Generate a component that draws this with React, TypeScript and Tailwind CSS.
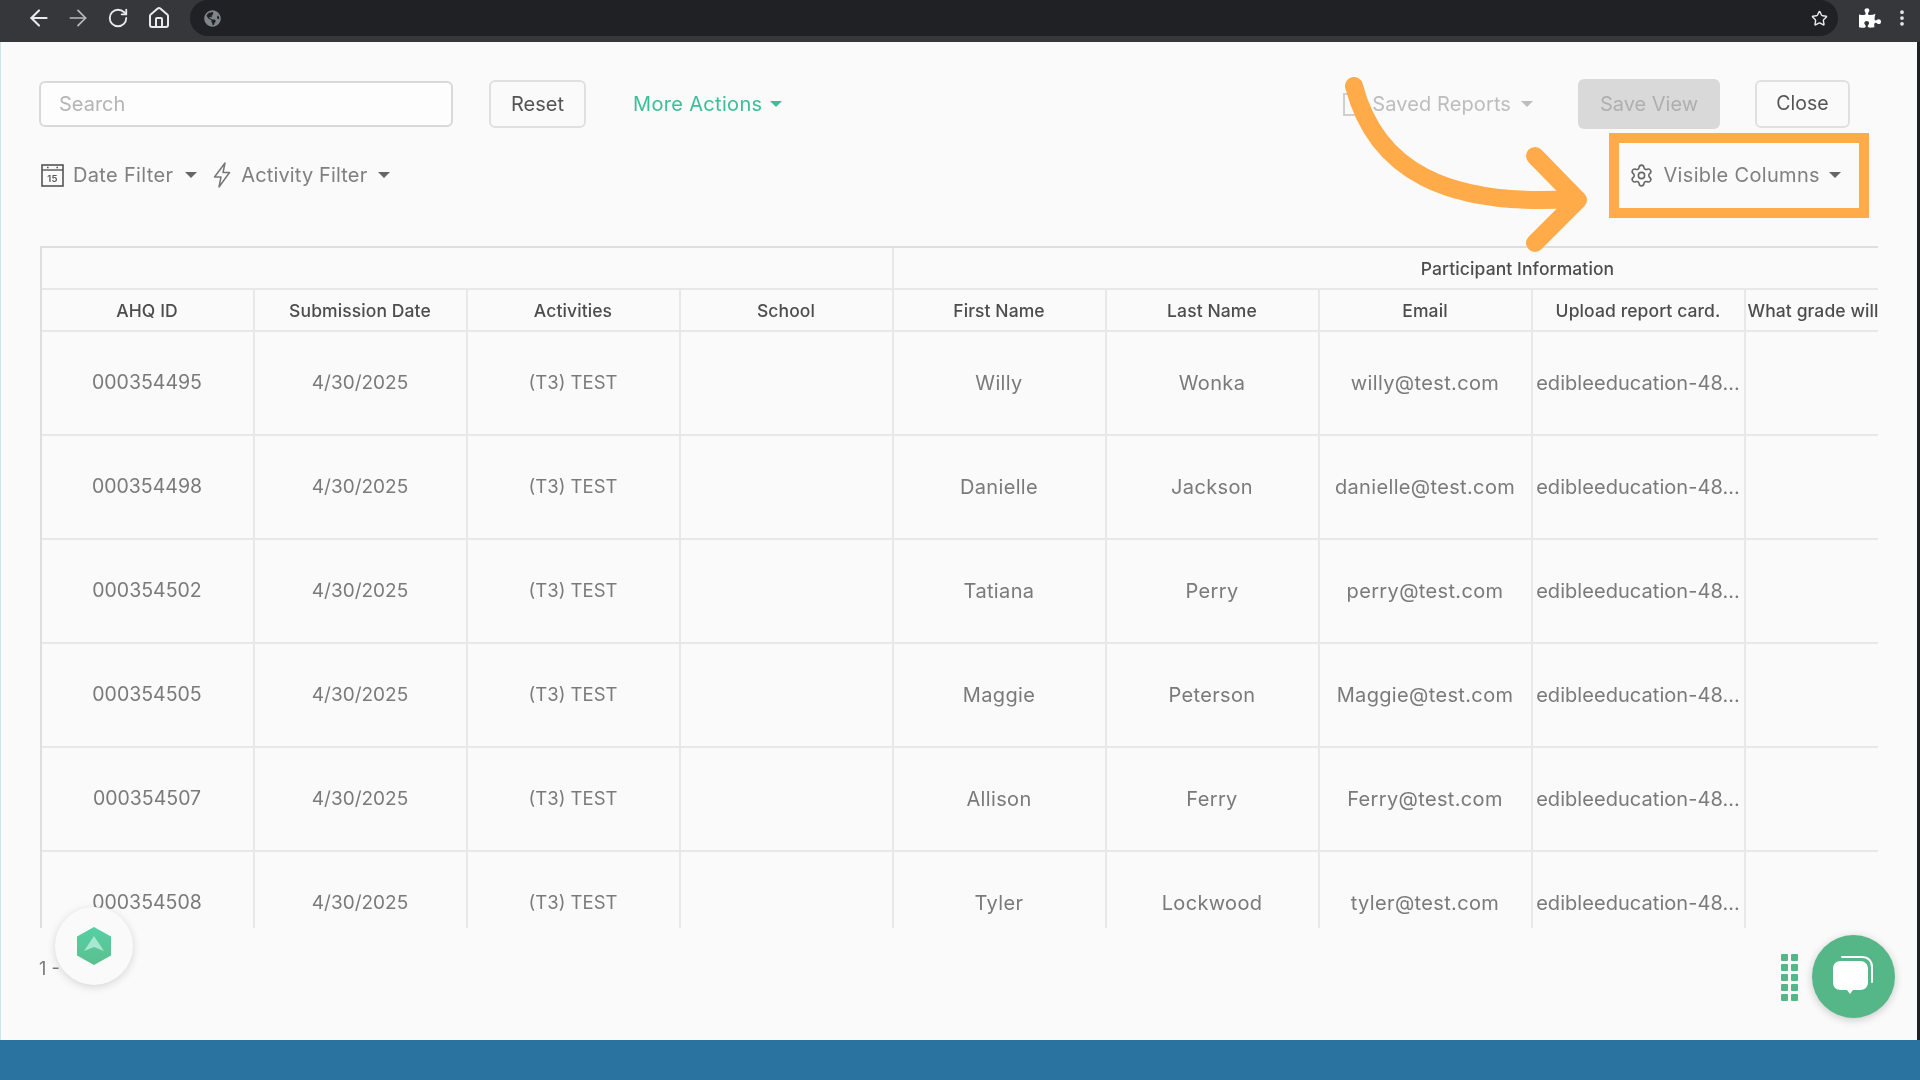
import React from "react";
import { ArrowLeft, ArrowRight, RotateCw, Home, Star, MoreVertical, Settings } from "lucide-react";
import { FaPuzzlePiece, FaGlobeAmericas } from "react-icons/fa";

const rows = [
  ["000354495", "Willy", "Wonka", "willy@test.com"],
  ["000354498", "Danielle", "Jackson", "danielle@test.com"],
  ["000354502", "Tatiana", "Perry", "perry@test.com"],
  ["000354505", "Maggie", "Peterson", "Maggie@test.com"],
  ["000354507", "Allison", "Ferry", "Ferry@test.com"],
  ["000354508", "Tyler", "Lockwood", "tyler@test.com"],
];
const headers = ["AHQ ID", "Submission Date", "Activities", "School", "First Name", "Last Name", "Email", "Upload report card."];

function Caret({ cls = "border-t-[#666]" }: { cls?: string }) {
  return <span className={`inline-block w-0 h-0 border-x-[6px] border-x-transparent border-t-[6px] ${cls}`} />;
}

function Head({ children }: { children?: React.ReactNode }) {
  return (
    <div className="h-[42px] pt-[2px] flex items-center justify-center border-r-2 border-b-2 border-[#e8e8e8] text-[17.5px] tracking-[0.1px] font-medium text-[#4d4d4d] whitespace-nowrap">
      {children}
    </div>
  );
}
function Cell({ children }: { children?: React.ReactNode }) {
  return (
    <div className="h-[104px] flex items-center justify-center border-r-2 border-b-2 border-[#e8e8e8] text-[19px] text-[#7a7a7a] whitespace-nowrap overflow-hidden">
      {children}
    </div>
  );
}
function WideCell({ children }: { children?: React.ReactNode }) {
  return (
    <div className="h-[104px] pb-[1px] flex items-center justify-center border-r-2 border-b-2 border-[#e8e8e8] text-[20px] tracking-[0.35px] text-[#7a7a7a] whitespace-nowrap overflow-hidden">
      {children}
    </div>
  );
}

export default function App() {
  return (
    <div className="relative w-[1920px] h-[1080px] overflow-hidden flex flex-col bg-[#fafafa] font-['Inter',sans-serif]">
      <header className="h-[42px] shrink-0 flex items-center bg-[#36373a] text-[#e8eaed]">
        <div className="w-[190px] h-[36px] mb-[6px] flex items-center pl-[26px] shrink-0">
          <ArrowLeft size={26} strokeWidth={1.9} />
          <ArrowRight size={26} strokeWidth={1.6} className="ml-[13px] text-[#b9bbbe]" />
          <RotateCw size={22} strokeWidth={2} className="ml-[16px]" />
          <Home size={24} strokeWidth={2} className="ml-[18px]" />
        </div>
        <div className="w-[1648px] h-[36px] mb-[6px] rounded-[18px] bg-[#202124] flex items-center pl-[14px] pr-[10px]">
          <FaGlobeAmericas size={17} className="text-[#80858b]" />
          <Star size={17} strokeWidth={2} className="ml-auto" />
        </div>
        <div className="flex-1 h-[36px] mb-[6px] flex items-center pl-[21px]">
          <FaPuzzlePiece size={22} className="text-white" />
          <MoreVertical size={20} strokeWidth={2.5} className="ml-[11px]" />
        </div>
      </header>

      <main className="relative flex-1 flex flex-col min-h-0 border-l border-[#cfe3ec] border-r-[3px] border-r-[#202124]">
        <div className="flex items-center h-[48px] mt-[38px] pl-[38px] pr-[67px] blur-[0.5px]">
          <div className="w-[414px] h-[46px] flex items-center border-2 border-[#d9d9d9] rounded-[6px] bg-[#fdfdfd] pl-[18px] text-[20px] text-[#b5b5b5]">
            Search
          </div>
          <button className="ml-[36px] w-[97px] h-[48px] border-2 border-[#e0e0e0] rounded-[6px] text-[20px] text-[#555]">Reset</button>
          <button className="ml-[47px] flex items-center gap-[8px] text-[20px] tracking-[0.33px] text-[#3cbf98]">
            More Actions <Caret cls="border-t-[#3cbf98]" />
          </button>
          <div className="ml-auto flex items-center">
            <span className="w-[20px] h-[23px] border-2 border-[#cfcfcf] mr-[9px]" />
            <span className="text-[20px] tracking-[0.1px] text-[#bdbdbd]">Saved Reports</span>
            <span className="ml-[10px] flex"><Caret cls="border-t-[#bdbdbd]" /></span>
            <button className="ml-[45px] w-[142px] h-[50px] rounded-[6px] bg-[#d9d9d9] text-[20px] text-[#afafaf]">Save View</button>
            <button className="ml-[35px] w-[95px] h-[48px] border-2 border-[#e0e0e0] rounded-[6px] text-[19.5px] text-[#555]">Close</button>
          </div>
        </div>

        <div className="flex items-center h-[40px] mt-[27px] pl-[40px] pr-[76px] text-[20px] tracking-[0.33px] text-[#808080] blur-[0.5px]">
          <svg width="23" height="23" viewBox="0 0 23 23" fill="none" stroke="#555" strokeWidth="1.6">
            <rect x="1" y="1" width="21" height="21" />
            <path d="M1 6h21" strokeWidth="1.4" />
            <path d="M6 3.5h1.6M15.4 3.5h1.6" strokeWidth="1.4" />
            <text x="11.5" y="18" textAnchor="middle" fontSize="9.5" fontWeight="600" fill="#555" stroke="none" fontFamily="Inter">15</text>
          </svg>
          <span className="ml-[9px]">Date Filter</span>
          <span className="ml-[12px] flex"><Caret /></span>
          <svg width="18" height="26" viewBox="0 0 18 26" fill="none" stroke="#777" strokeWidth="1.5" strokeLinejoin="round" className="ml-[16px]">
            <path d="M12 1L1.5 15H8L6 25L16.5 10.5H10Z" />
          </svg>
          <span className="ml-[10px] tracking-[0.15px]">Activity Filter</span>
          <span className="ml-[11px] flex"><Caret /></span>
          <div className="ml-auto flex items-center">
            <Settings size={25} strokeWidth={1.5} className="text-[#666]" />
            <span className="ml-[9px]">Visible Columns</span>
            <span className="ml-[9px] flex"><Caret /></span>
          </div>
        </div>

        <div className="mt-[51px] ml-[38.5px] w-[1838.5px] h-[682px] overflow-hidden blur-[0.5px]">
          <div className="w-[2102px] grid grid-cols-[repeat(8,213px)_396px] border-l-2 border-t-2 border-[#dedede]">
            <div className="col-span-4 h-[42px] border-r-2 border-b-2 border-[#e8e8e8]" />
            <div className="col-span-5 h-[42px] pt-[2px] flex items-center justify-center border-b-2 border-[#e8e8e8] text-[17.5px] tracking-[0.1px] font-medium text-[#4d4d4d]">
              Participant Information
            </div>
            {headers.map((h) => <Head key={h}>{h}</Head>)}
            <div className="h-[42px] pt-[2px] flex items-center pl-[2px] border-b-2 border-[#e8e8e8] text-[17.5px] tracking-[0.1px] font-medium text-[#4d4d4d] whitespace-nowrap">What grade will</div>
            {rows.map((r) => (
              <React.Fragment key={r[0]}>
                <Cell><span className="text-[19.5px]">{r[0]}</span></Cell>
                <Cell>4/30/2025</Cell>
                <Cell><span className="text-[18.5px]">(T3) TEST</span></Cell>
                <Cell />
                <WideCell>{r[1]}</WideCell>
                <WideCell>{r[2]}</WideCell>
                <WideCell>{r[3]}</WideCell>
                <div className="h-[104px] pb-[1px] flex items-center justify-center border-r-2 border-b-2 border-[#e8e8e8] text-[20px] tracking-[0.05px] text-[#7a7a7a] whitespace-nowrap overflow-hidden">edibleeducation-48...</div>
                <div className="h-[104px] border-b-2 border-[#e8e8e8]" />
              </React.Fragment>
            ))}
          </div>
        </div>
        <div className="pl-[38px] mt-[27px] text-[18px] text-[#777] blur-[0.5px]">1 - 6</div>

        <div className="absolute left-[1608px] top-[91px] w-[260px] h-[85px] border-[10px] border-[#ffab4a]" />
        <svg className="absolute left-[1320px] top-[20px] w-[280px] h-[220px]" viewBox="1320 62 280 220" fill="none" stroke="#ffab4a" strokeWidth="18" strokeLinecap="round" strokeLinejoin="round">
          <path d="M1353 86C1375 170 1445 207 1572 199" />
          <path d="M1534 156L1577 200L1534 243" />
        </svg>

        <div className="absolute left-[54px] top-[865px] w-[78px] h-[78px] rounded-full bg-[#fafafa] shadow-[0_2px_8px_rgba(0,0,0,0.15)] flex items-center justify-center">
          <svg width="34" height="38" viewBox="0 0 34 38">
            <defs>
              <linearGradient id="hex" x1="0" y1="0" x2="0" y2="1">
                <stop offset="0" stopColor="#55d0a4" />
                <stop offset="1" stopColor="#5cbf8f" />
              </linearGradient>
            </defs>
            <path d="M17 0L34 9.5V28.5L17 38L0 28.5V9.5Z" fill="url(#hex)" />
            <path d="M17 9L27 24L17 20L7 24Z" fill="#a9e8d0" />
          </svg>
        </div>

        <div className="absolute left-[1780px] top-[912px] grid grid-cols-2 gap-x-[3px] gap-y-[3px]">
          {Array.from({ length: 10 }).map((_, i) => (
            <span key={i} className="w-[7px] h-[7px] rounded-[1px] bg-[#55b688]" />
          ))}
        </div>
        <div className="absolute left-[1811px] top-[893px] w-[83px] h-[83px] rounded-full bg-[#55b688] shadow-[0_2px_8px_rgba(0,0,0,0.2)] flex items-center justify-center">
          <svg width="44" height="44" viewBox="0 0 44 44" fill="none">
            <path d="M10 2H30C36 2 40 6 40 12V27" stroke="#fff" strokeWidth="2" strokeLinecap="round" />
            <path d="M9 6H28C33 6 36 9 36 14V27C36 32 33 35 28 35H21L18 39L15 35H9C4 35 1 32 1 27V14C1 9 4 6 9 6Z" fill="#fff" />
          </svg>
        </div>
      </main>

      <footer className="h-[40px] shrink-0 bg-[#2a72a0]" />
    </div>
  );
}
